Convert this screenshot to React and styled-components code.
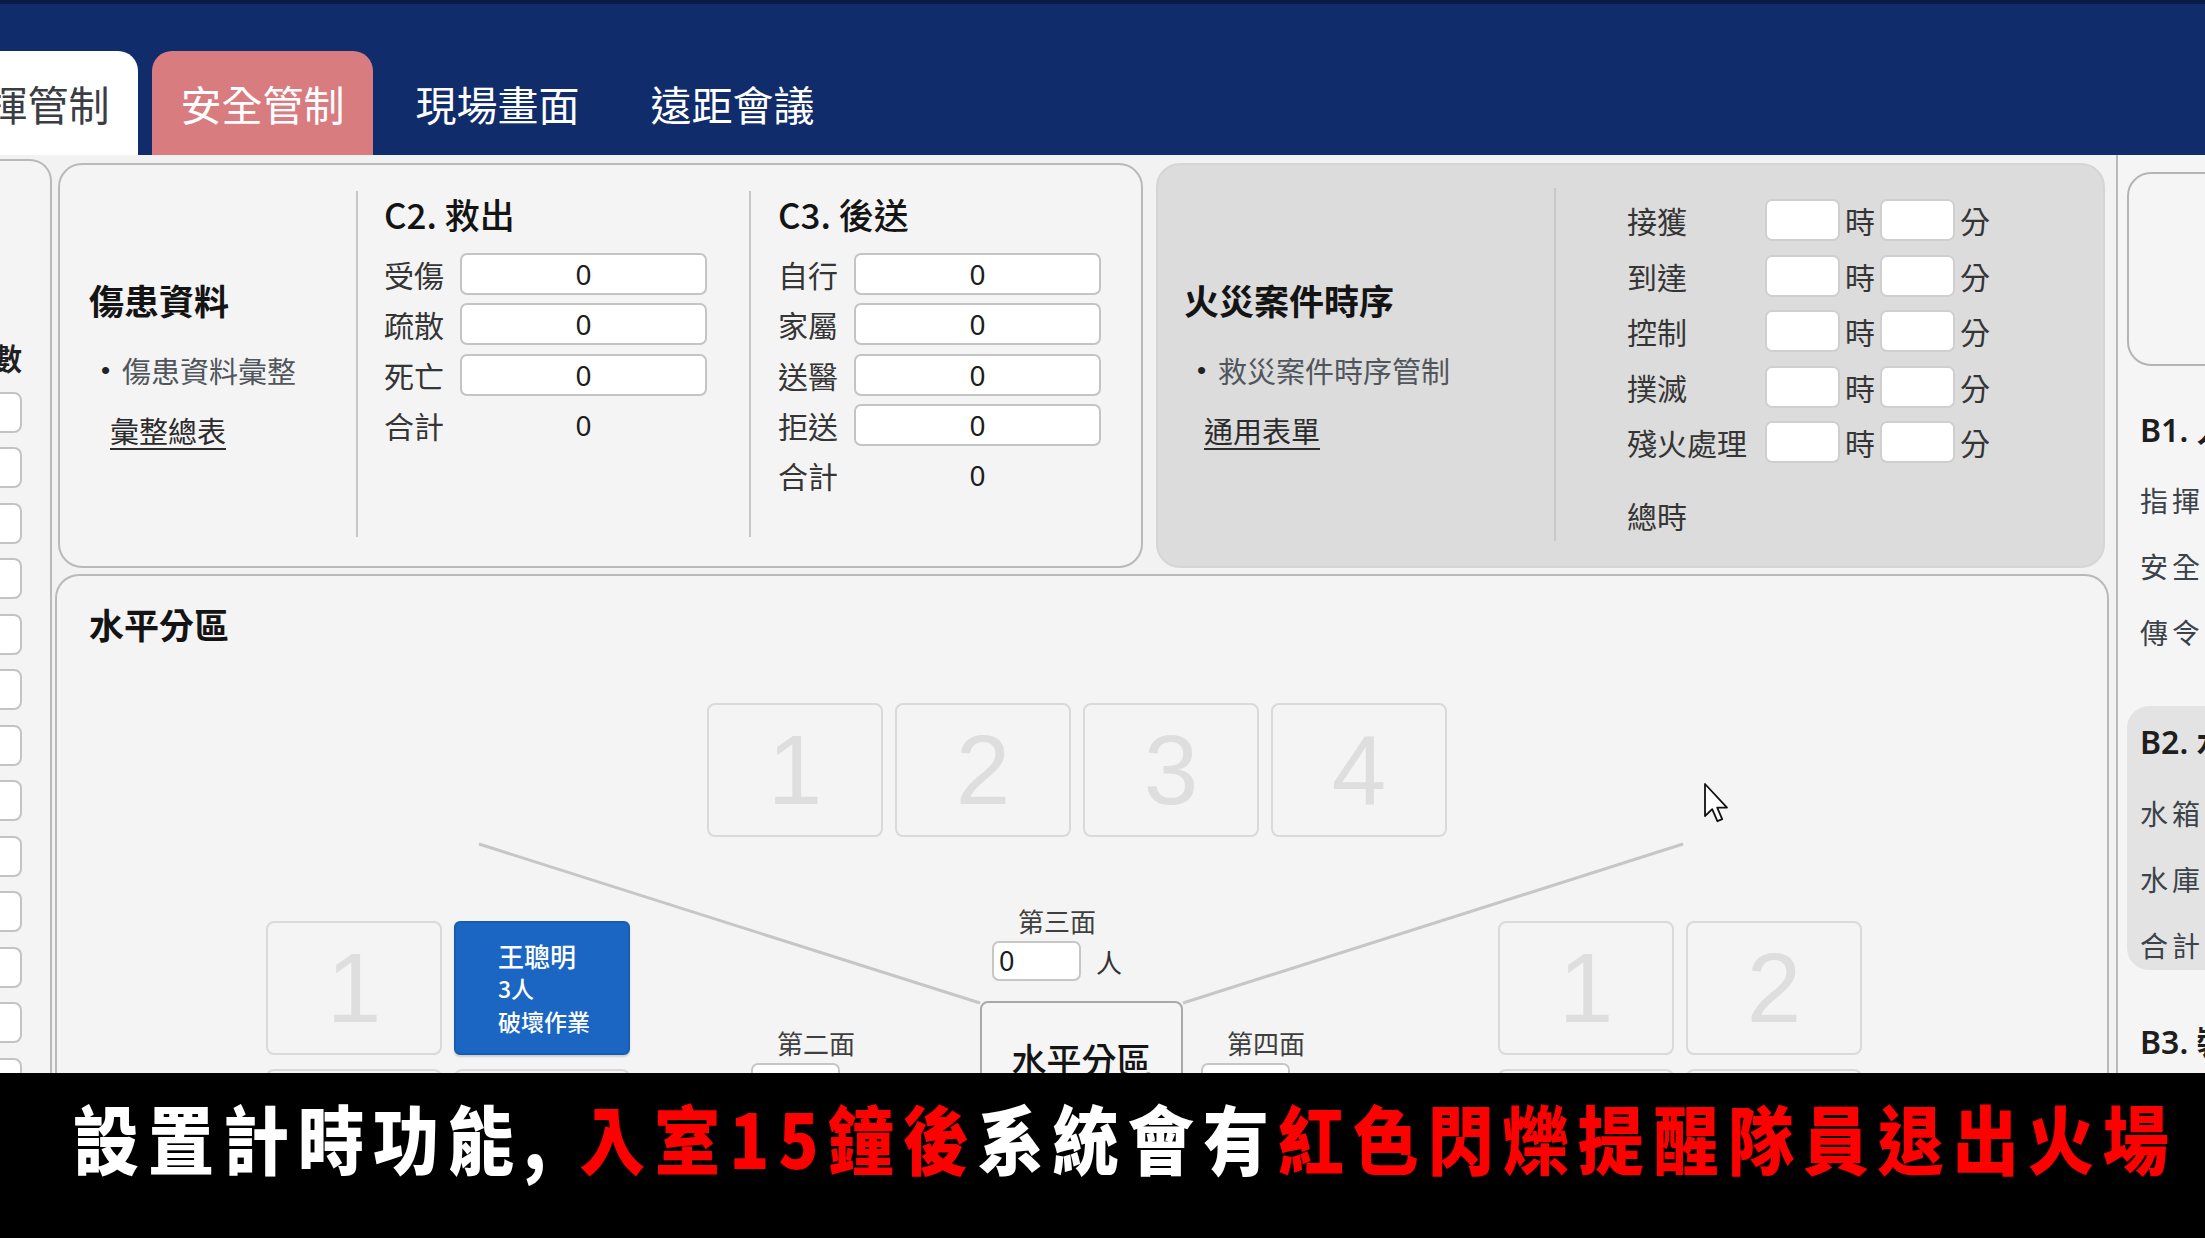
import React from "react";
import styled, { createGlobalStyle } from "styled-components";

const CJK = `"Noto Sans CJK TC", "Noto Sans", sans-serif`;
const LATIN = `"Noto Sans", "Noto Sans CJK TC", sans-serif`;

const GlobalStyle = createGlobalStyle`
  html, body { margin: 0; padding: 0; }
  body { font-family: ${CJK}; background: #000; }
  *, *::before, *::after { box-sizing: border-box; }
`;

const Screen = styled.div`
  width: 2205px;
  height: 1238px;
  overflow: hidden;
  display: flex;
  flex-direction: column;
  background: #f2f2f2;
`;

/* ---------- top navigation ---------- */
const TopBar = styled.header`
  flex: none;
  height: 155px;
  background: #112c6b;
  border-top: 4px solid #0a1b47;
  display: flex;
  align-items: flex-end;
`;

const TabRow = styled.nav`
  display: flex;
  gap: 14px;
  margin-left: -83px;
`;

const Tab = styled.div`
  width: 221px;
  height: 104px;
  border-radius: 20px 20px 0 0;
  display: flex;
  align-items: center;
  justify-content: center;
  font-size: 41px;
  line-height: 1;
  color: ${(p) => (p.$variant === "current" ? "#3a3d44" : "#ffffff")};
  background: ${(p) =>
    p.$variant === "current" ? "#ffffff" : p.$variant === "alert" ? "#d87c80" : "transparent"};
`;

/* ---------- working area ---------- */
const Workspace = styled.main`
  flex: 1;
  min-height: 0;
  display: flex;
  overflow: hidden;
`;

const SideRail = styled.aside`
  flex: none;
  width: 202px;
  margin-left: -150px;
  margin-top: 4px;
  background: #f4f4f4;
  border: 2px solid #b9b9b9;
  border-bottom: none;
  border-radius: 0 22px 0 0;
  padding: 176px 28px 0 0;
  display: flex;
  flex-direction: column;
  align-items: flex-end;
  gap: 14.5px;
  overflow: hidden;
`;

const RailTitle = styled.div`
  font-size: 30px;
  line-height: 40px;
  font-weight: 700;
  color: #1f1f1f;
`;

const RailField = styled.div`
  flex: none;
  width: 150px;
  height: 41px;
  background: #ffffff;
  border: 2px solid #c3c3c3;
  border-radius: 8px;
`;

const MainColumn = styled.div`
  flex: none;
  width: 2054px;
  margin-left: 3px;
  display: flex;
  flex-direction: column;
`;

const SummaryRow = styled.div`
  display: flex;
  gap: 13px;
  margin-top: 8px;
  padding: 0 4px 0 3px;
`;

const Panel = styled.section`
  flex: ${(p) => (p.$width ? "none" : "1")};
  width: ${(p) => (p.$width ? `${p.$width}px` : "auto")};
  height: 405px;
  display: flex;
  background: ${(p) => (p.$shade ? "#dcdcdc" : "#f4f4f4")};
  border: 2px solid ${(p) => (p.$shade ? "#d5d5d5" : "#b9b9b9")};
  border-radius: 24px;
`;

const Column = styled.div`
  flex: ${(p) => (p.$width ? "none" : "1")};
  width: ${(p) => (p.$width ? `${p.$width}px` : "auto")};
  margin: ${(p) => p.$inset || "26px 0 29px"};
  padding: ${(p) => p.$padTop || 0}px 0 0 ${(p) => p.$padLeft}px;
  border-left: ${(p) => (p.$divider ? "2px solid #c8c8c8" : "none")};
  display: flex;
  flex-direction: column;
  justify-content: ${(p) => (p.$centered ? "center" : "flex-start")};
`;

const Heading = styled.h3`
  margin: ${(p) => p.$top || 0}px 0 0;
  font-family: ${CJK};
  font-size: 35px;
  line-height: ${(p) => p.$lh || 48}px;
  font-weight: ${(p) => p.$weight || 700};
  color: #141414;
  white-space: nowrap;
`;

const BulletItem = styled.div`
  display: flex;
  align-items: center;
  margin: 24px 0 0 ${(p) => p.$indent}px;
  font-size: 29px;
  line-height: 44px;
  color: #50565c;
  white-space: nowrap;
`;

const Dot = styled.span`
  width: 21px;
  flex: none;
  text-align: left;
  font-family: "Liberation Sans", Arial, sans-serif;
  font-size: 26px;
  color: #222;
`;

const LinkText = styled.a`
  display: block;
  margin: 16px 0 0 ${(p) => p.$indent}px;
  font-size: 29px;
  line-height: 44px;
  color: #2b2b2b;
  text-decoration: underline;
  text-underline-offset: 5px;
  white-space: nowrap;
`;

/* count fields */
const FieldList = styled.div`
  display: flex;
  flex-direction: column;
  gap: 8.3px;
  margin-top: 17px;
`;

const FieldRow = styled.div`
  display: flex;
  align-items: center;
  gap: 14px;
  height: 42px;
`;

const FieldLabel = styled.span`
  width: 62px;
  flex: none;
  font-size: 30px;
  line-height: 42px;
  color: #353535;
  white-space: nowrap;
`;

const ValueBox = styled.div`
  width: 247px;
  height: 42px;
  flex: none;
  display: flex;
  align-items: center;
  justify-content: center;
  font-family: ${LATIN};
  font-size: 28px;
  color: #1c1c1c;
  background: ${(p) => (p.$plain ? "transparent" : "#ffffff")};
  border: 2px solid ${(p) => (p.$plain ? "transparent" : "#c4c4c4")};
  border-radius: 7px;
`;

/* timeline */
const TimeList = styled.div`
  display: flex;
  flex-direction: column;
  gap: 13.5px;
`;

const TimeRow = styled.div`
  display: flex;
  align-items: center;
  height: 42px;
  margin-top: ${(p) => p.$extra || 0}px;
`;

const TimeLabel = styled.span`
  width: 138px;
  flex: none;
  font-size: 30px;
  line-height: 42px;
  color: #353535;
  white-space: nowrap;
`;

const TimeBox = styled.div`
  width: 75px;
  height: 42px;
  flex: none;
  background: #ffffff;
  border: 2px solid #cfcfcf;
  border-radius: 7px;
`;

const Unit = styled.span`
  font-size: 30px;
  line-height: 42px;
  color: #353535;
  margin: 0 ${(p) => p.$after || 5}px 0 5px;
`;

/* ---------- zone diagram ---------- */
const ZonePanel = styled.section`
  flex: 1;
  min-height: 0;
  margin-top: 6px;
  position: relative;
  overflow: hidden;
  background: #f4f4f4;
  border: 2px solid #b9b9b9;
  border-bottom: none;
  border-radius: 24px 24px 0 0;
  padding: 24px 0 0 32px;
`;

const Canvas = styled.div`
  position: absolute;
  inset: 0;
`;

const Wires = styled.svg`
  position: absolute;
  left: 0;
  top: 0;
`;

const Node = styled.div`
  position: absolute;
  left: ${(p) => p.$x}px;
  top: ${(p) => p.$y}px;
`;

const TileGrid = styled.div`
  display: grid;
  grid-template-columns: repeat(${(p) => p.$cols}, 176px);
  grid-auto-rows: 134px;
  gap: 14px 12px;
`;

const Tile = styled.div`
  display: flex;
  align-items: center;
  justify-content: center;
  background: #f4f4f4;
  border: 2px solid #d9d9d9;
  border-radius: 8px;
  font-family: "Liberation Sans", Arial, sans-serif;
  font-size: 98px;
  line-height: 1;
  color: #dedede;
`;

const CrewTile = styled.div`
  display: flex;
  flex-direction: column;
  justify-content: center;
  padding-left: 42px;
  background: #1b65c3;
  border: 2px solid #1a5cb0;
  border-radius: 6px;
  color: #ffffff;
  box-shadow: 0 2px 2px rgba(0, 0, 0, 0.15);
`;

const CrewLine = styled.span`
  font-size: ${(p) => p.$size}px;
  line-height: 33px;
  font-weight: 500;
  white-space: nowrap;
`;

const HubBox = styled.div`
  width: 203px;
  height: 190px;
  padding-top: 32px;
  text-align: center;
  background: #f5f5f5;
  border: 2px solid #a9a9a9;
  border-radius: 8px;
  font-size: 35px;
  line-height: 48px;
  font-weight: 500;
  color: #141414;
`;

const Face = styled.div`
  display: flex;
  flex-direction: column;
  align-items: center;
`;

const FaceLabel = styled.span`
  font-size: 26px;
  line-height: 34px;
  color: #3f3f3f;
`;

const FaceRow = styled.div`
  display: flex;
  align-items: center;
  gap: 15px;
  margin-top: 3px;
`;

const CountBox = styled.div`
  width: 89px;
  height: 40px;
  padding-left: 5px;
  background: #ffffff;
  border: 2px solid #c6c6c6;
  border-radius: 7px;
  font-family: ${LATIN};
  font-size: 27px;
  line-height: 36px;
  color: #1c1c1c;
`;

const FaceUnit = styled.span`
  font-size: 26px;
  color: #333;
`;

const Pointer = styled.svg`
  position: absolute;
  left: ${(p) => p.$x}px;
  top: ${(p) => p.$y}px;
`;

/* ---------- right rail ---------- */
const RightRail = styled.aside`
  flex: none;
  width: 400px;
  margin-left: 7px;
  background: #f5f5f5;
  border-left: 2px solid #b9b9b9;
  padding: 17px 0 0 9px;
`;

const RailCard = styled.div`
  width: 300px;
  height: 194px;
  background: #f5f5f5;
  border: 2px solid #b4b4b4;
  border-radius: 24px;
`;

const GroupTitle = styled.div`
  margin-top: ${(p) => p.$top}px;
  padding-left: 13px;
  font-family: ${LATIN};
  font-size: 32px;
  line-height: 44px;
  font-weight: 600;
  color: #1e1e1e;
`;

const GroupItem = styled.div`
  margin-top: ${(p) => p.$top || 22}px;
  padding-left: 13px;
  font-size: 28px;
  line-height: 44px;
  letter-spacing: 4px;
  color: #3b4249;
  white-space: nowrap;
`;

const GroupBox = styled.div`
  margin-top: 52px;
  width: 300px;
  height: 264px;
  padding-top: 14px;
  background: #e3e3e3;
  border-radius: 22px;
`;

/* ---------- caption ---------- */
const Caption = styled.footer`
  flex: none;
  height: 165px;
  background: #000000;
  padding: 23px 0 0 73px;
  white-space: nowrap;
`;

const CaptionLine = styled.p`
  margin: 0;
  display: inline-block;
  font-family: ${CJK};
  font-weight: 900;
  font-size: 66px;
  line-height: 80px;
  letter-spacing: 9px;
  color: #ffffff;
  transform: scaleY(1.13);
  transform-origin: left center;
`;

const Hot = styled.span`
  color: #ff0000;
`;

const c2Rows = ["受傷", "疏散", "死亡"];
const c3Rows = ["自行", "家屬", "送醫", "拒送"];
const timeRows = ["接獲", "到達", "控制", "撲滅", "殘火處理"];

function CountColumn({ title, rows, padLeft, width }) {
  return (
    <Column $divider $width={width} $padLeft={padLeft}>
      <Heading $top={1} $lh={44} $weight={500}>
        {title}
      </Heading>
      <FieldList>
        {rows.map((r) => (
          <FieldRow key={r}>
            <FieldLabel>{r}</FieldLabel>
            <ValueBox>0</ValueBox>
          </FieldRow>
        ))}
        <FieldRow>
          <FieldLabel>合計</FieldLabel>
          <ValueBox $plain>0</ValueBox>
        </FieldRow>
      </FieldList>
    </Column>
  );
}

function FaceInput({ label }) {
  return (
    <Face>
      <FaceLabel>{label}</FaceLabel>
      <FaceRow>
        <CountBox>0</CountBox>
        <FaceUnit>人</FaceUnit>
      </FaceRow>
    </Face>
  );
}

export default function App() {
  return (
    <Screen>
      <GlobalStyle />
      <TopBar>
        <TabRow>
          <Tab $variant="current">指揮管制</Tab>
          <Tab $variant="alert">安全管制</Tab>
          <Tab>現場畫面</Tab>
          <Tab>遠距會議</Tab>
        </TabRow>
      </TopBar>

      <Workspace>
        <SideRail>
          <RailTitle>人數</RailTitle>
          {Array.from({ length: 13 }).map((_, i) => (
            <RailField key={i} />
          ))}
        </SideRail>

        <MainColumn>
          <SummaryRow>
            <Panel $width={1085}>
              <Column $width={296} $padLeft={29} $centered>
                <Heading>傷患資料</Heading>
                <BulletItem $indent={12}>
                  <Dot>•</Dot>傷患資料彙整
                </BulletItem>
                <LinkText $indent={21}>彙整總表</LinkText>
              </Column>
              <CountColumn title="C2. 救出" rows={c2Rows} padLeft={26} width={393} />
              <CountColumn title="C3. 後送" rows={c3Rows} padLeft={27} />
            </Panel>

            <Panel $shade>
              <Column $width={396} $padLeft={26} $centered>
                <Heading>火災案件時序</Heading>
                <BulletItem $indent={13}>
                  <Dot>•</Dot>救災案件時序管制
                </BulletItem>
                <LinkText $indent={20}>通用表單</LinkText>
              </Column>
              <Column $divider $padLeft={71} $padTop={11} $inset="23px 0 25px">
                <TimeList>
                  {timeRows.map((r) => (
                    <TimeRow key={r}>
                      <TimeLabel>{r}</TimeLabel>
                      <TimeBox />
                      <Unit>時</Unit>
                      <TimeBox />
                      <Unit $after={0}>分</Unit>
                    </TimeRow>
                  ))}
                  <TimeRow $extra={17}>
                    <TimeLabel>總時</TimeLabel>
                  </TimeRow>
                </TimeList>
              </Column>
            </Panel>
          </SummaryRow>

          <ZonePanel>
            <Heading>水平分區</Heading>
            <Canvas>
              <Wires width="2050" height="700">
                <line x1="422" y1="268" x2="923" y2="427" stroke="#c6c6c6" strokeWidth="3" />
                <line x1="1626" y1="268" x2="1126" y2="427" stroke="#c6c6c6" strokeWidth="3" />
              </Wires>

              <Node $x={650} $y={127}>
                <TileGrid $cols={4}>
                  <Tile>1</Tile>
                  <Tile>2</Tile>
                  <Tile>3</Tile>
                  <Tile>4</Tile>
                </TileGrid>
              </Node>

              <Node $x={209} $y={345}>
                <TileGrid $cols={2}>
                  <Tile>1</Tile>
                  <CrewTile>
                    <CrewLine $size={26}>王聰明</CrewLine>
                    <CrewLine $size={23}>3人</CrewLine>
                    <CrewLine $size={23}>破壞作業</CrewLine>
                  </CrewTile>
                  <Tile />
                  <Tile />
                </TileGrid>
              </Node>

              <Node $x={1441} $y={345}>
                <TileGrid $cols={2}>
                  <Tile>1</Tile>
                  <Tile>2</Tile>
                  <Tile />
                  <Tile />
                </TileGrid>
              </Node>

              <Node $x={935} $y={328}>
                <FaceInput label="第三面" />
              </Node>
              <Node $x={694} $y={450}>
                <FaceInput label="第二面" />
              </Node>
              <Node $x={1144} $y={450}>
                <FaceInput label="第四面" />
              </Node>

              <Node $x={923} $y={425}>
                <HubBox>水平分區</HubBox>
              </Node>

              <Pointer $x={1646} $y={206} width="26" height="42" viewBox="0 0 13 21">
                <path
                  d="M1 1 L1 17 L4.6 13.6 L7.2 19.6 L9.6 18.6 L7.1 12.8 L12 12.8 Z"
                  fill="#ffffff"
                  stroke="#111111"
                  strokeWidth="0.9"
                  strokeLinejoin="round"
                />
              </Pointer>
            </Canvas>
          </ZonePanel>
        </MainColumn>

        <RightRail>
          <RailCard />
          <GroupTitle $top={42}>B1. 人員</GroupTitle>
          <GroupItem $top={26}>指揮官</GroupItem>
          <GroupItem>安全官</GroupItem>
          <GroupItem>傳令員</GroupItem>
          <GroupBox>
            <GroupTitle $top={0}>B2. 水源</GroupTitle>
            <GroupItem $top={27}>水箱車</GroupItem>
            <GroupItem>水庫車</GroupItem>
            <GroupItem>合計</GroupItem>
          </GroupBox>
          <GroupTitle $top={50}>B3. 裝備</GroupTitle>
        </RightRail>
      </Workspace>

      <Caption>
        <CaptionLine>
          設置計時功能, <Hot>入室15鐘後</Hot>系統會有<Hot>紅色閃爍提醒隊員退出火場</Hot>
        </CaptionLine>
      </Caption>
    </Screen>
  );
}
